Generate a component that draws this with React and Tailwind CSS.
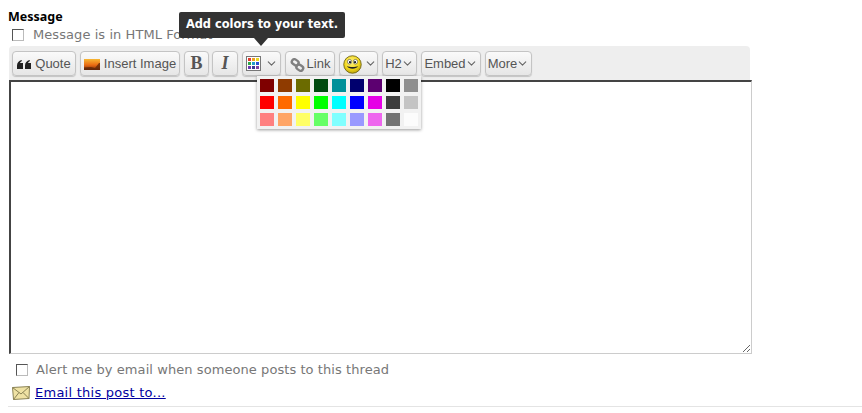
import { ChevronDown } from 'lucide-react';

const colors = [
  ['#7f0000', '#8f3b00', '#6b6b00', '#004a0f', '#009099', '#00006e', '#5c0070', '#000000', '#8f8f8f'],
  ['#ff0000', '#ff6a00', '#ffff00', '#00ff00', '#00ffff', '#0000ff', '#e600e6', '#3d3d3d', '#c4c4c4'],
  ['#ff8080', '#ffa566', '#ffff66', '#66ff66', '#80ffff', '#9999ff', '#ee66ee', '#737373', '#fcfcfc'],
];

const Btn = ({ className = '', children }) => (
  <div className={`h-[25px] flex items-center justify-center shrink-0 whitespace-nowrap rounded-[4px] border border-[#c4c4c4] bg-gradient-to-b from-[#fafafa] to-[#e6e6e6] shadow-[0_1px_1px_rgba(0,0,0,0.18)] text-[#555] ${className}`}>
    {children}
  </div>
);

const Caret = ({ className = '' }) => <ChevronDown size={13} strokeWidth={2} className={`text-[#666] ${className}`} />;

const QuoteIcon = () => (
  <svg width="14" height="9" viewBox="0 0 14 9" className="mr-[4px] mt-[2px]">
    <path d="M0 5.5C0 2.5 2 .8 4.5 0L5 1C3.8 1.6 3.2 2.2 3 3H6V9H0Z" fill="#222" />
    <path d="M8 5.5C8 2.5 10 .8 12.5 0L13 1C11.8 1.6 11.2 2.2 11 3H14V9H8Z" fill="#222" />
  </svg>
);

const ImageIcon = () => (
  <svg width="16" height="11" viewBox="0 0 16 11" className="mr-[4px] mt-[2px]">
    <defs>
      <linearGradient id="sunset" x1="0" y1="0" x2="0" y2="1">
        <stop offset="0" stopColor="#f7b733" />
        <stop offset="0.55" stopColor="#ea6a12" />
        <stop offset="1" stopColor="#7a2c08" />
      </linearGradient>
    </defs>
    <rect width="16" height="11" fill="url(#sunset)" />
    <path d="M0 11V8.5L7 8L11 9L15 4L16 4V11Z" fill="#5a2408" opacity="0.75" />
  </svg>
);

const PaletteIcon = () => (
  <svg width="15" height="15" viewBox="0 0 15 15" className="ml-[3px]">
    <rect x="0.5" y="0.5" width="14" height="14" fill="#fff" stroke="#777" />
    <rect x="2" y="2" width="3" height="3" fill="#e23b2e" />
    <rect x="6" y="2" width="3" height="3" fill="#f0a020" />
    <rect x="10" y="2" width="3" height="3" fill="#e8d820" />
    <rect x="2" y="6" width="3" height="3" fill="#2ea84a" />
    <rect x="6" y="6" width="3" height="3" fill="#20a0c8" />
    <rect x="10" y="6" width="3" height="3" fill="#2a50d0" />
    <rect x="2" y="10" width="3" height="3" fill="#6a3ab0" />
    <rect x="6" y="10" width="3" height="3" fill="#3a3a90" />
    <rect x="10" y="10" width="3" height="3" fill="#8040a0" />
  </svg>
);

const LinkIcon = () => (
  <svg width="15" height="14" viewBox="0 0 14 14" className="mr-[2px] mt-[3px]" fill="none" stroke="#808080" strokeWidth="2.4">
    <rect x="1.2" y="1.8" width="7" height="5" rx="2.4" transform="rotate(35 4.7 4.3)" />
    <rect x="5.8" y="7.2" width="7" height="5" rx="2.4" transform="rotate(35 9.3 9.7)" />
  </svg>
);

const Smiley = () => (
  <svg width="19" height="19" viewBox="0 0 18 18" className="ml-[3px] mt-[2px]">
    <defs>
      <radialGradient id="face" cx="0.45" cy="0.35" r="0.7">
        <stop offset="0" stopColor="#fff38a" />
        <stop offset="0.6" stopColor="#f2d81c" />
        <stop offset="1" stopColor="#b39a0c" />
      </radialGradient>
    </defs>
    <circle cx="9" cy="9" r="8.3" fill="url(#face)" stroke="#6b5f10" strokeWidth="0.8" />
    <ellipse cx="6.2" cy="6.4" rx="2" ry="2.2" fill="#fff" stroke="#333" strokeWidth="0.5" />
    <ellipse cx="11.8" cy="6.4" rx="2" ry="2.2" fill="#fff" stroke="#333" strokeWidth="0.5" />
    <circle cx="6.6" cy="6.8" r="1" fill="#111" />
    <circle cx="11.4" cy="6.8" r="1" fill="#111" />
    <path d="M3.8 10.5C5 14 13 14 14.2 10.5C12 11.8 6 11.8 3.8 10.5Z" fill="#222" />
  </svg>
);

const Envelope = () => (
  <svg width="18" height="14" viewBox="0 0 18 14" className="shrink-0">
    <path d="M.5 1.5L17.5.5L17 12.5L1.5 13.5Z" fill="#efe2a4" stroke="#8a8254" />
    <path d="M.5 1.5L9 8L17.5.5M1.5 13.5L7 6.5M17 12.5L11 6.5" fill="none" stroke="#8a8254" />
  </svg>
);

const Box = () => <span className="block w-[12px] h-[12px] shrink-0 border border-[#555] border-r-[#bbb] border-b-[#bbb] bg-white" />;

export default function App() {
  return (
    <div className="w-[862px] h-[413px] overflow-hidden bg-white pt-[9px] font-['DejaVu_Sans','Verdana',sans-serif]">
      <div className="pl-2 text-[12.5px] leading-[15px] font-bold text-black font-['Noto_Sans','DejaVu_Sans',sans-serif]">Message</div>
      <div className="flex items-center pl-[12px] h-[22px] text-[13px] text-[#777] tracking-[0.07px]">
        <Box />
        <span className="ml-[9px]">Message is in HTML Format</span>
      </div>

      <div className="ml-[9px] w-[741px] h-[34px] rounded-t-[4px] bg-[#eeeeee] flex items-start pt-[5px] pl-[3px] gap-1 text-[13px] font-['Liberation_Sans',Arial,sans-serif] relative z-10">
        <Btn className="w-[64px]"><QuoteIcon />Quote</Btn>
        <Btn className="w-[100px]"><ImageIcon />Insert Image</Btn>
        <Btn className="w-[25px] font-['Liberation_Serif',serif] font-bold text-[18px] text-[#222]">B</Btn>
        <Btn className="w-[26px] -ml-px font-['Liberation_Serif',serif] italic font-bold text-[18px] text-[#444]">I</Btn>

        <div className="relative shrink-0">
          <Btn className="w-[39px] justify-start"><PaletteIcon /><Caret className="ml-[4px]" /></Btn>
          {/* tooltip */}
          <div className="absolute left-[-63px] top-[-39px] w-[166px] h-[26px] rounded-[2px] bg-[#333333] text-white text-[11.4px] font-bold font-['DejaVu_Sans',sans-serif] flex items-center justify-center whitespace-nowrap">
            Add colors to your text.
          </div>
          <div className="absolute left-[12px] top-[-13px] w-0 h-0 border-x-[7px] border-x-transparent border-t-[8px] border-t-[#333333]" />
          {/* palette */}
          <div className="absolute left-[15px] top-[25px] w-[164px] h-[53px] bg-[#f2f2f2] shadow-[0_1px_3px_rgba(0,0,0,0.4)] pt-[3px] pl-[3px] flex flex-col gap-1">
            {colors.map((row, i) => (
              <div key={i} className="flex gap-1">
                {row.map((c) => (
                  <span key={c} className="block w-[14px] h-[13px]" style={{ backgroundColor: c }} />
                ))}
              </div>
            ))}
          </div>
        </div>

        <Btn className="w-[50px]"><LinkIcon />Link</Btn>
        <Btn className="w-[39px] justify-start"><Smiley /><Caret className="ml-[2px]" /></Btn>
        <Btn className="w-[35px]">H2<Caret className="-ml-px" /></Btn>
        <Btn className="w-[60px]">Embed<Caret className="-ml-px" /></Btn>
        <Btn className="w-[47px]">More<Caret className="-ml-px" /></Btn>
      </div>

      <textarea
        readOnly
        className="block ml-[9px] w-[743px] h-[274px] bg-white outline-none resize border-t-2 border-l-2 border-r border-b border-t-[#444] border-l-[#444] border-r-[#ccc] border-b-[#ccc]"
      />

      <div className="flex items-center pl-[16px] h-[21px] mt-[5px] text-[13px] text-[#777] tracking-[0.07px]">
        <Box />
        <span className="ml-[8px]">Alert me by email when someone posts to this thread</span>
      </div>
      <div className="flex items-center pl-[12px] h-[17px] mt-[4px] text-[13px] tracking-[0.25px]">
        <Envelope />
        <a href="#" className="ml-[5px] text-[#0000a0] underline">Email this post to...</a>
      </div>
      <div className="ml-2 mt-[5px] border-t border-[#e4e4e4]" />
    </div>
  );
}
